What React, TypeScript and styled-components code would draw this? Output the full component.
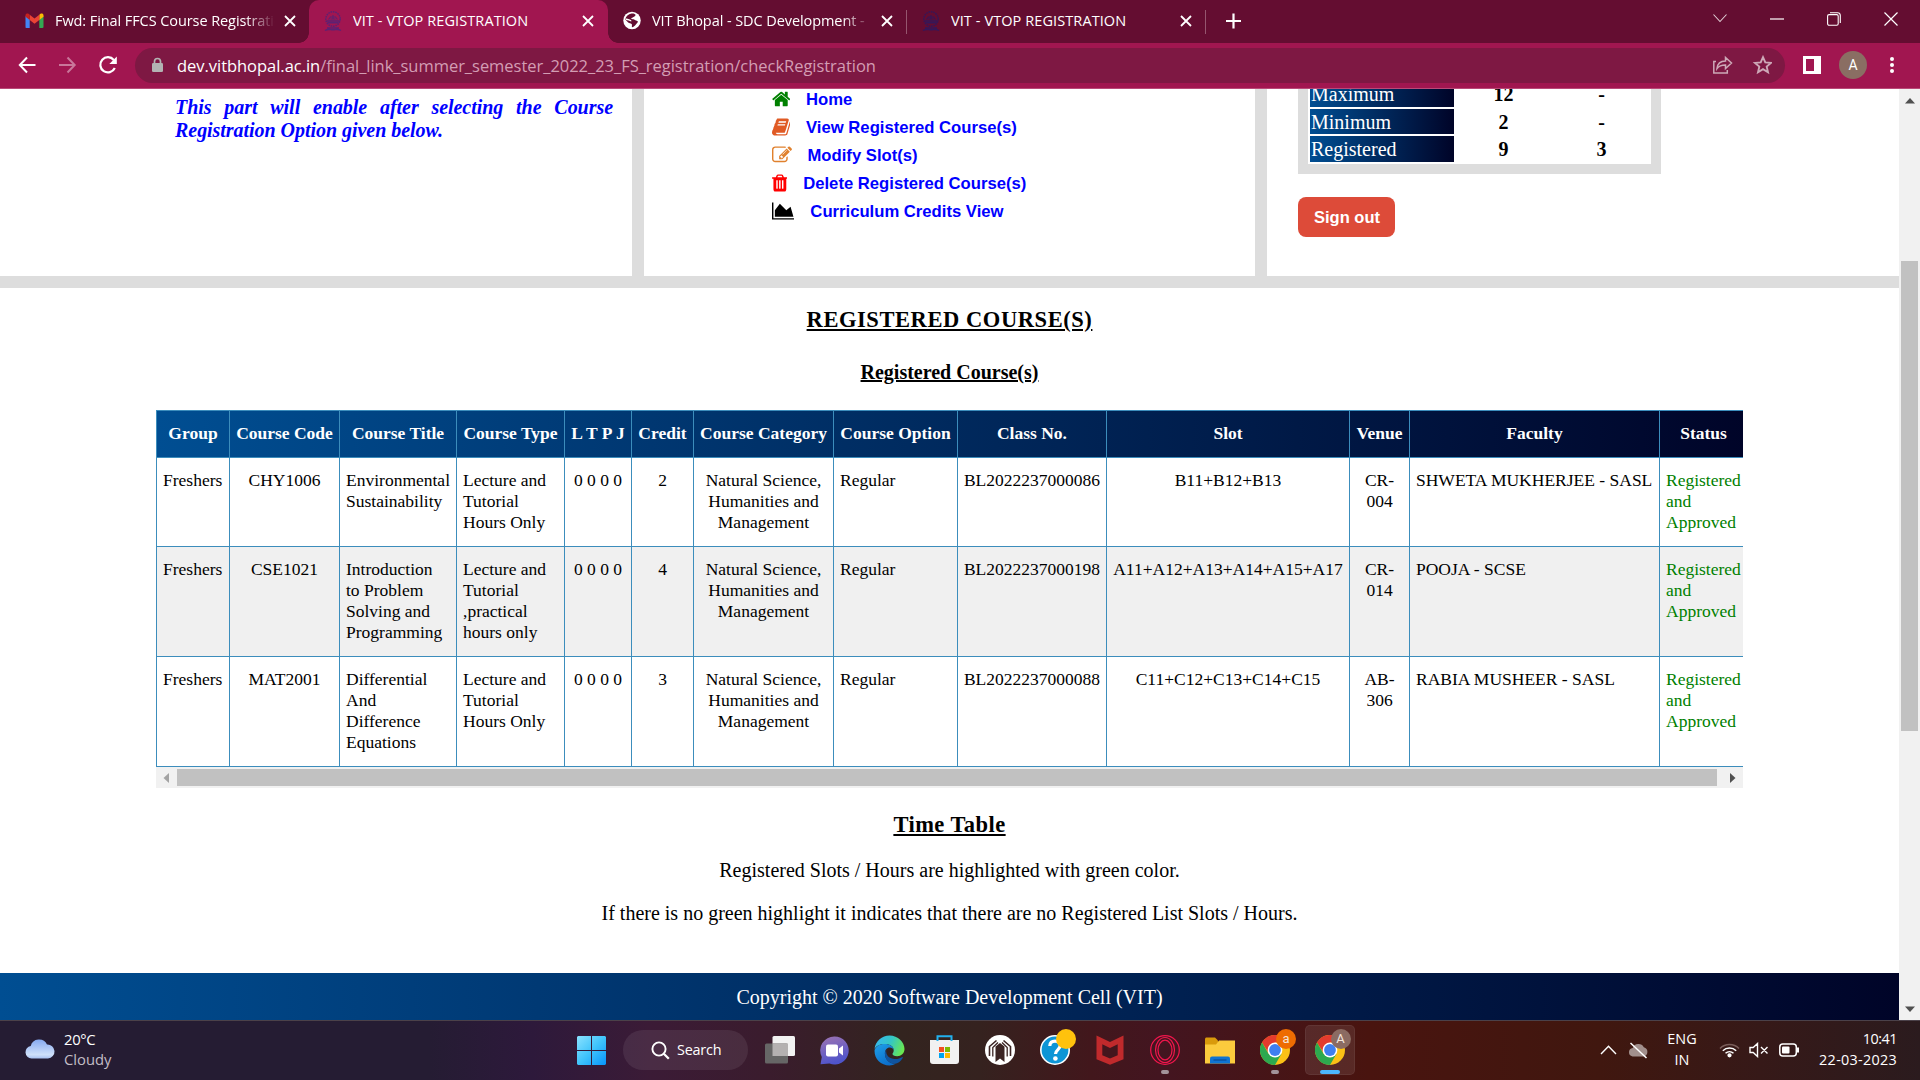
import React from "react";
import styled, { createGlobalStyle, css } from "styled-components";

const ui = `"Open Sans", "Noto Sans", sans-serif`;
const serif = `"Liberation Serif", "Times New Roman", serif`;
const arial = `"Liberation Sans", Arial, sans-serif`;
const royal = "linear-gradient(to right, #004e92, #000428)";

const GlobalStyle = createGlobalStyle`
  * { box-sizing: border-box; }
  body { margin: 0; background: #fff; overflow: hidden; }
  svg { display: block; flex: none; }
`;

const Screen = styled.div`
  width: 1920px;
  height: 1080px;
  display: flex;
  flex-direction: column;
  overflow: hidden;
`;

/* ---------- browser chrome ---------- */

const TitleBar = styled.header`
  height: 43px;
  flex: none;
  display: flex;
  align-items: stretch;
  padding-left: 10px;
  background: #640d31;
  color: #fff;
`;

const Tab = styled.div<{ $active?: boolean; $divided?: boolean }>`
  position: relative;
  width: 299px;
  display: flex;
  align-items: center;
  padding: 0 0 2px 15px;
  ${(p) =>
    p.$active &&
    css`
      background: #a11650;
      border-radius: 10px 10px 0 0;
      &::before,
      &::after {
        content: "";
        position: absolute;
        bottom: 0;
        width: 10px;
        height: 10px;
      }
      &::before {
        left: -10px;
        background: radial-gradient(circle at 0 0, transparent 9.5px, #a11650 10px);
      }
      &::after {
        right: -10px;
        background: radial-gradient(circle at 100% 0, transparent 9.5px, #a11650 10px);
      }
    `}
  ${(p) =>
    p.$divided &&
    css`
      &::after {
        content: "";
        position: absolute;
        right: 0;
        top: 10px;
        width: 1px;
        height: 24px;
        background: #95566f;
      }
    `}
`;

const TabTitle = styled.span<{ $fade?: boolean }>`
  width: 220px;
  margin: 0 9px 0 11px;
  overflow: hidden;
  white-space: nowrap;
  font: 14.5px/20px ${ui};
  letter-spacing: ${(p) => (p.$fade ? -0.08 : 0.09)}px;
  ${(p) => p.$fade && "mask-image: linear-gradient(to right, #000 190px, transparent 220px);"}
`;

const NewTab = styled.div`
  display: flex;
  align-items: center;
  padding: 0 0 2px 20px;
`;

const WindowButtons = styled.div`
  margin-left: auto;
  display: flex;
  align-items: center;
  padding: 0 1px 6px 0;
`;

const WindowButton = styled.div`
  width: 57px;
  display: flex;
  justify-content: center;
`;

const Toolbar = styled.div`
  height: 46px;
  flex: none;
  display: flex;
  align-items: center;
  padding: 0 0 1px 17px;
  background: #a11650;
  border-bottom: 1px solid #b94a78;
`;

const NavButton = styled.div`
  width: 40px;
  display: flex;
`;

const Omnibox = styled.div`
  width: 1650px;
  height: 35px;
  margin: 0 18px 0 -2px;
  border-radius: 18px;
  background: #7e1843;
  display: flex;
  align-items: center;
  padding: 0 13px 0 16px;
`;

const Url = styled.span`
  margin-left: 13px;
  padding-top: 1px;
  flex: 1;
  font: 16.5px/24px ${ui};
  letter-spacing: -0.035px;
  color: #d39db3;
  white-space: nowrap;
  b {
    color: #fff;
    font-weight: 400;
  }
`;

const Avatar = styled.div`
  width: 28px;
  height: 28px;
  margin: 0 22px 0 18px;
  border-radius: 50%;
  background: #8a6e63;
  color: #fff;
  text-align: center;
  font: 14px/28px Roboto, sans-serif;
`;

/* ---------- web page ---------- */

const Viewport = styled.div`
  height: 931px;
  flex: none;
  display: flex;
`;

const Page = styled.main`
  width: 1899px;
  display: flex;
  flex-direction: column;
  background: #fff;
  overflow: hidden;
  font-family: ${serif};
`;

const Panels = styled.section`
  height: 199px;
  flex: none;
  display: grid;
  grid-template-columns: 632px 623px 644px;
  border-bottom: 12px solid #ddd;
  overflow: hidden;
`;

const Panel = styled.div<{ $pad: string; $edge: number }>`
  background: #fff;
  overflow: hidden;
  border-left: ${(p) => p.$edge}px solid #ddd;
  padding: ${(p) => p.$pad};
`;

const Notice = styled.p`
  margin: 0;
  width: 438px;
  text-align: justify;
  color: #00f;
  font: italic bold 20px/23px ${serif};
  letter-spacing: -0.04px;
`;

const Menu = styled.nav`
  margin-top: -4px;
  display: flex;
  flex-direction: column;
`;

const MenuItem = styled.a`
  height: 28px;
  display: flex;
  align-items: center;
  gap: 16px;
  color: #00f;
  font: bold 16.67px/28px ${arial};
  white-space: nowrap;
  span {
    padding-top: 1px;
  }
`;

const Credits = styled.div`
  width: 363px;
  margin-top: -8px;
  padding: 0 10px 10px;
  background: #ddd;
`;

const CreditGrid = styled.div`
  display: grid;
  grid-template-columns: 144px 95px 97px;
  grid-auto-rows: 25.67px;
  gap: 2px;
  padding: 0 2px 2px;
  background: #fff;
`;

const CreditLabel = styled.div`
  padding-left: 1px;
  background: ${royal};
  color: #fff;
  font: 20px/26px ${serif};
`;

const CreditValue = styled.div`
  text-align: center;
  font: bold 20px/26px ${serif};
`;

const SignOut = styled.button`
  display: block;
  width: 97px;
  height: 40px;
  margin-top: 23px;
  padding: 0 0 0 1px;
  border: 0;
  border-radius: 8px;
  background: #dd4b39;
  color: #fff;
  font: bold 16.5px/20px ${arial};
`;

const Heading = styled.h2<{ $size: number; $line: number; $ls: number; $top: number }>`
  margin: ${(p) => p.$top}px 0 0;
  flex: none;
  text-align: center;
  text-decoration: underline;
  font: bold ${(p) => p.$size}px/${(p) => p.$line}px ${serif};
  letter-spacing: ${(p) => p.$ls}px;
`;

const Line = styled.p<{ $top: number }>`
  margin: ${(p) => p.$top}px 0 0;
  flex: none;
  text-align: center;
  font: 20px/24px ${serif};
`;

const TableBox = styled.div`
  width: 1587px;
  margin: 27px 0 0 156px;
  flex: none;
  overflow: hidden;
`;

const Table = styled.table`
  width: 1592px;
  table-layout: fixed;
  border-collapse: separate;
  border-spacing: 0;
  border: solid #3c8dbc;
  border-width: 1px 0 0 1px;
  font: 17.5px/21px ${serif};
`;

const HeadRow = styled.tr`
  background: ${royal};
  color: #fff;
`;

const Th = styled.th`
  height: 47px;
  padding: 0 0 2px;
  border: solid #3c8dbc;
  border-width: 0 1px 1px 0;
  white-space: nowrap;
`;

const Row = styled.tr<{ $shade: boolean }>`
  background: ${(p) => (p.$shade ? "#f0f0f0" : "#fff")};
`;

const Td = styled.td<{ $align?: string; $color?: string }>`
  padding: 12px 0 13px ${(p) => (p.$align === "left" ? 6 : 0)}px;
  border: solid #3c8dbc;
  border-width: 0 1px 1px 0;
  vertical-align: top;
  white-space: pre;
  text-align: ${(p) => p.$align};
  color: ${(p) => p.$color ?? "#000"};
`;

const HScroll = styled.div`
  height: 21px;
  display: flex;
  align-items: center;
  background: #f1f1f1;
  padding: 0 7px 0 7px;
`;

const HThumb = styled.div`
  width: 1540px;
  height: 17px;
  margin: 0 auto 0 8px;
  background: #c1c1c1;
`;

const Footer = styled.footer`
  height: 47px;
  margin-top: auto;
  flex: none;
  background: ${royal};
  color: #fff;
  text-align: center;
  font: 20px/49px ${serif};
`;

const VScroll = styled.div`
  width: 21px;
  display: flex;
  flex-direction: column;
  align-items: center;
  background: #f1f1f1;
  padding: 9px 0 8px;
`;

const VThumb = styled.div`
  width: 17px;
  height: 470px;
  margin: 157px 0 auto;
  background: #c1c1c1;
`;

/* ---------- taskbar ---------- */

const Taskbar = styled.footer`
  height: 60px;
  flex: none;
  display: flex;
  align-items: center;
  padding-bottom: 1px;
  border-top: 1px solid #4b4149;
  background: linear-gradient(
    to right,
    #251c33 0,
    #251c33 430px,
    #2d193b 530px,
    #3b1b36 650px,
    #3a1c2d 770px,
    #33241f 900px,
    #35221f 980px,
    #42171c 1090px,
    #431520 1160px,
    #49140f 1370px,
    #40170f 1600px,
    #361918 1760px,
    #2b1b1e 1920px
  );
  color: #fff;
  font: 14.4px/20px ${ui};
`;

const Weather = styled.div`
  width: 564px;
  display: flex;
  align-items: center;
  gap: 9px;
  padding: 0 0 2px 25px;
  font-size: 14.8px;
  line-height: 20px;
  letter-spacing: -0.3px;
  span {
    display: block;
    color: #c2bdc6;
    letter-spacing: 0;
  }
`;

const Slot = styled.div<{ $active?: boolean }>`
  position: relative;
  width: ${(p) => (p.$active ? 50 : 55)}px;
  margin-left: ${(p) => (p.$active ? 2.5 : 0)}px;
  height: 50px;
  display: flex;
  align-items: center;
  justify-content: center;
  border-radius: 5px;
  ${(p) =>
    p.$active &&
    css`
      background: rgba(255, 255, 255, 0.09);
      box-shadow: inset 0 0 0 1px rgba(255, 255, 255, 0.06);
    `}
`;

const Running = styled.i<{ $wide?: boolean }>`
  position: absolute;
  left: 50%;
  bottom: 1px;
  width: ${(p) => (p.$wide ? 20 : 8)}px;
  height: 4px;
  border-radius: 2px;
  transform: translateX(-50%);
  background: ${(p) => (p.$wide ? "#4cb8ff" : "#a3939a")};
`;

const Badge = styled.b<{ $bg: string; $right?: number }>`
  position: absolute;
  right: ${(p) => p.$right ?? 6}px;
  top: 4px;
  width: 20px;
  height: 20px;
  border-radius: 50%;
  background: ${(p) => p.$bg};
  color: #f3e6dd;
  text-align: center;
  font: 13px/20px Roboto, sans-serif;
`;

const SearchPill = styled.div`
  width: 125px;
  height: 40px;
  margin: 0 4px;
  border-radius: 20px;
  background: rgba(255, 255, 255, 0.08);
  display: flex;
  align-items: center;
  gap: 7px;
  padding-left: 28px;
  letter-spacing: -0.2px;
`;

const Tray = styled.div`
  flex: 1;
  display: flex;
  align-items: center;
  justify-content: flex-end;
  padding-right: 23px;
  white-space: nowrap;
`;

const TrayText = styled.div`
  line-height: 20.5px;
  padding-bottom: 1px;
`;

const Language = styled(TrayText)`
  width: 46px;
  margin-right: 14px;
  text-align: center;
`;

const Clock = styled(TrayText)`
  width: 81px;
  text-align: right;
  letter-spacing: -0.5px;
  span {
    display: block;
    letter-spacing: 0.28px;
  }
`;

const TrayIcon = styled.div<{ $w: number }>`
  width: ${(p) => p.$w}px;
`;

/* ---------- icons ---------- */

const Close = () => (
  <svg width="12" height="12" viewBox="0 0 12 12" stroke="#fff" strokeWidth="1.8">
    <path d="M1 1l10 10M11 1L1 11" />
  </svg>
);

const Gmail = () => (
  <svg width="19" height="16" viewBox="0 0 19 16">
    <path d="M.5 3v10.5A1.2 1.2 0 0 0 1.7 15h3V6z" fill="#4285f4" />
    <path d="M14.3 15h3a1.2 1.2 0 0 0 1.2-1.3V3l-4.2 3z" fill="#34a853" />
    <path d="M14.3 1.8V7l4.2-3.2V2.5C18.5.6 16.5.1 15.2 1z" fill="#fbbc04" />
    <path d="M4.7 7V1.8l4.8 3.7 4.8-3.7V7l-4.8 3.7z" fill="#ea4335" />
    <path d="M.5 2.5v1.3L4.7 7V1.8L3.8 1C2.5.1.5.6.5 2.5z" fill="#c5221f" />
  </svg>
);

const Crest = ({ dim }: { dim?: boolean }) => (
  <svg width="18" height="22" viewBox="0 0 18 22" fill="none" stroke={dim ? "#351758" : "#5c2273"}>
    <circle cx="9" cy="9" r="7.2" strokeWidth="1.5" strokeDasharray="1.6 .8" />
    <path d="M2.5 11h13M3.5 12.7h11" strokeWidth="1.4" />
    <path d="M4.5 9.500l2-2.500h5l2 2.500M9 5v4M6.500 9h5" strokeWidth="1.100" />
    <path d="M1 20.500c3-2 5-.7 8-.7s5-1.300 8 .7M3 18h12" strokeWidth="1.400" />
  </svg>
);

const Globe = () => (
  <svg width="18" height="19" viewBox="0 0 19 19">
    <circle cx="9.5" cy="9.5" r="9.2" fill="#fff" />
    <path
      d="M9 2.200c1.800-.2 3.300.3 4.300 1.100-.2 1.500-1.500 1.800-2.300 2.500-.7.800-2 .7-2.500 1.700 1.200 1 2.700.4 3.700 1.300.8 1 2.600.8 3.600 1.700-.4 1.600-1.700 2.200-2.400 3.400-.8 1.300-2.300 2.300-3.900 2.600-.5-1.200.5-2.400-.4-3.400-1.100-.9-2.500-.6-3.600-1.600C4.500 10.500 3.400 9.600 2.400 8.500 3 5 5.500 2.700 9 2.200z"
      fill="#640d31"
    />
    <path d="M3 8.200c2.500-.4 3.500 1.600 5.700 1.500" stroke="#fff" strokeWidth="1.500" fill="none" />
  </svg>
);

const faIcons = {
  home: {
    box: "64 0 1664 1792",
    w: 18.57,
    color: "#008000",
    d: "M1472 992v480q0 26-19 45t-45 19h-384v-384h-256v384h-384q-26 0-45-19t-19-45v-480q0-1 .5-3t.5-3l575-474 575 474q1 2 1 6zm223-69l-62 74q-8 9-21 11h-3q-13 0-21-7l-692-577-692 577q-12 8-24 7-13-2-21-11l-62-74q-8-10-7-23.5t11-21.5l719-599q32-26 76-26t76 26l244 204v-195q0-14 9-23t23-9h192q14 0 23 9t9 23v408l219 182q10 8 11 21.5t-7 23.5z",
  },
  book: {
    box: "0 0 1664 1792",
    w: 18.57,
    color: "#e05a24",
    d: "M1639 478q40 57 18 129l-275 906q-19 64-76.5 107.5T1183 1664H260q-77 0-148.5-53.5T12 1479q-24-67-2-127 0-4 3-27t4-37q1-8-3-21.5t-3-19.5q2-11 8-21t16.5-23.5T52 1179q23-38 45-91.5t30-91.5q3-10 .5-30t-.5-28q3-11 17-28t17-23q21-36 42-92t25-90q1-9-2.5-32t.5-28q4-13 22-30.5t22-22.5q19-26 42.5-84.5T340 411q1-8-3-25.5t-2-26.5q2-8 9-18t18-23 17-21q8-12 16.5-30.5t15-35 16-36 19.5-32T469 139.5t36-11.5 47.5 5.5l-1 3q38-9 51-9h761q74 0 114 56t18 130l-274 906q-36 119-71.5 153.5T1255 1407H386q-27 0-38 15-11 16-1 43 24 70 144 70h692q29 0 56-15.5t35-41.5l300-987q7-22 5-57 38 15 60 44zM575 480q-4 13 2 22.5t20 9.5h608q13 0 25.5-9.5T1247 480l21-64q4-13-2-22.5t-20-9.5H638q-13 0-25.5 9.5T596 416zm-83 256q-4 13 2 22.5t20 9.5h608q13 0 25.5-9.5T1164 736l21-64q4-13-2-22.5t-20-9.5H555q-13 0-25.5 9.5T513 672z",
  },
  edit: {
    box: "0 0 1792 1792",
    w: 20,
    color: "#e0812e",
    d: "M888 1184l116-116-152-152-116 116v56h96v96h56zm440-720q-16-16-33 1l-350 350q-17 17-1 33t33-1l350-350q17-17 1-33zm80 594v190q0 119-84.5 203.5t-203.5 84.5h-832q-119 0-203.5-84.5t-84.5-203.5v-832q0-119 84.5-203.5t203.5-84.5h832q63 0 117 25 15 7 18 23 3 17-9 29l-49 49q-14 14-32 8-23-6-45-6h-832q-66 0-113 47t-47 113v832q0 66 47 113t113 47h832q66 0 113-47t47-113v-126q0-13 9-22l64-64q15-15 35-7t20 29zm-96-738l288 288-672 672h-288v-288zm444 132l-92 92-288-288 92-92q28-28 68-28t68 28l152 152q28 28 28 68t-28 68z",
  },
  trash: {
    box: "192 0 1408 1792",
    w: 15.71,
    color: "#f00",
    d: "M704 1376v-704q0-14-9-23t-23-9h-64q-14 0-23 9t-9 23v704q0 14 9 23t23 9h64q14 0 23-9t9-23zm256 0v-704q0-14-9-23t-23-9h-64q-14 0-23 9t-9 23v704q0 14 9 23t23 9h64q14 0 23-9t9-23zm256 0v-704q0-14-9-23t-23-9h-64q-14 0-23 9t-9 23v704q0 14 9 23t23 9h64q14 0 23-9t9-23zm-544-992h448l-48-117q-7-9-17-11h-317q-10 2-17 11zm928 32v64q0 14-9 23t-23 9h-96v948q0 83-47 143.5t-113 60.5h-832q-66 0-113-58.5t-47-141.5v-952h-96q-14 0-23-9t-9-23v-64q0-14 9-23t23-9h309l70-167q15-37 54-63t79-26h320q40 0 79 26t54 63l70 167h309q14 0 23 9t9 23z",
  },
  chart: {
    box: "0 0 2048 1792",
    w: 22.86,
    color: "#000",
    d: "M2048 1536v128h-2048v-1536h128v1408h1920zm-384-1024l256 896h-1664v-576l448-576 576 576z",
  },
};

const FaIcon = ({ name }: { name: keyof typeof faIcons }) => {
  const i = faIcons[name];
  return (
    <svg width={i.w} height="20" viewBox={i.box} fill={i.color}>
      <path d={i.d} />
    </svg>
  );
};

const Chrome = () => (
  <svg width="30" height="30" viewBox="0 0 30 30">
    <circle cx="15" cy="15" r="15" fill="#fbc116" />
    <path d="M2 7.5A15 15 0 0 1 28 7.5H15L9 18.5z" fill="#e33b2e" />
    <path d="M2 7.5A15 15 0 0 0 15 30l6.5-11.3L8.5 18.7z" fill="#2da94f" />
    <circle cx="15" cy="15" r="7.4" fill="#fff" />
    <circle cx="15" cy="15" r="5.9" fill="#3f7ff0" />
  </svg>
);

const Edge = () => (
  <svg width="31" height="31" viewBox="0 0 31 31">
    <defs>
      <linearGradient id="edgeTop" x1="0" y1="0.3" x2="1" y2="0.6">
        <stop offset="0" stopColor="#36b8ef" />
        <stop offset="0.5" stopColor="#34c6c4" />
        <stop offset="1" stopColor="#6be94d" />
      </linearGradient>
      <linearGradient id="edgeLeft" x1="0" y1="0" x2="0.6" y2="1">
        <stop offset="0" stopColor="#1fa0e8" />
        <stop offset="1" stopColor="#0b6dcb" />
      </linearGradient>
    </defs>
    <path d="M.5 14C1.5 6 8 .5 15.5.5 24 .5 30.5 7 30.5 14c0 4.5-3.5 7.2-7.3 7.2-3.2 0-4.7-1.3-4.7-2.3 0-.8 1.2-1.3 1.2-3.7C19.7 11.5 16 9 11 9 6 9 2 11 .5 14z" fill="url(#edgeTop)" />
    <path d="M.5 15.5C1.5 11.5 5.5 9 10.5 9c5.5 0 9 2.5 9.2 6-.5-1.5-2-2.5-3.8-2.5-3 0-5 2.5-5 6 0 5.5 4.5 10.5 10.6 10.3-2 1.2-4 1.7-6 1.7C7 30.5.3 24 .5 15.5z" fill="url(#edgeLeft)" />
    <path d="M12.3 15c-1 5 3.2 9 8.7 9 3 0 5.5-1 7-1.8.7-.3 1 .2.7.7-2.2 3.7-5 5.5-7.7 5.9-5.5.2-10.1-4.3-10.1-10 0-1.400.5-2.900 1.400-3.800z" fill="#0f54a0" />
  </svg>
);

const columns = [
  { label: "Group", w: 73, align: "left" },
  { label: "Course Code", w: 110, align: "center" },
  { label: "Course Title", w: 117, align: "left" },
  { label: "Course Type", w: 108, align: "left" },
  { label: "L T P J", w: 67, align: "center" },
  { label: "Credit", w: 62, align: "center" },
  { label: "Course Category", w: 140, align: "center" },
  { label: "Course Option", w: 124, align: "left" },
  { label: "Class No.", w: 149, align: "center" },
  { label: "Slot", w: 243, align: "center" },
  { label: "Venue", w: 60, align: "center" },
  { label: "Faculty", w: 250, align: "left" },
  { label: "Status", w: 88, align: "left" },
];

const category = "Natural Science,\nHumanities and\nManagement";
const status = "Registered\nand\nApproved";
const courses = [
  ["Freshers", "CHY1006", "Environmental\nSustainability", "Lecture and\nTutorial\nHours Only", "0 0 0 0", "2", category, "Regular", "BL2022237000086", "B11+B12+B13", "CR-\n004", "SHWETA MUKHERJEE - SASL", status],
  ["Freshers", "CSE1021", "Introduction\nto Problem\nSolving and\nProgramming", "Lecture and\nTutorial\n,practical\nhours only", "0 0 0 0", "4", category, "Regular", "BL2022237000198", "A11+A12+A13+A14+A15+A17", "CR-\n014", "POOJA - SCSE", status],
  ["Freshers", "MAT2001", "Differential\nAnd\nDifference\nEquations", "Lecture and\nTutorial\nHours Only", "0 0 0 0", "3", category, "Regular", "BL2022237000088", "C11+C12+C13+C14+C15", "AB-\n306", "RABIA MUSHEER - SASL", status],
];

const menu: [keyof typeof faIcons, string][] = [
  ["home", "Home"],
  ["book", "View Registered Course(s)"],
  ["edit", "Modify Slot(s)"],
  ["trash", "Delete Registered Course(s)"],
  ["chart", "Curriculum Credits View"],
];

const credits = [
  ["Maximum", "12", "-"],
  ["Minimum", "2", "-"],
  ["Registered", "9", "3"],
];

const BrowserChrome = () => (
  <>
    <TitleBar>
      <Tab>
        <Gmail />
        <TabTitle $fade>Fwd: Final FFCS Course Registration</TabTitle>
        <Close />
      </Tab>
      <Tab $active>
        <Crest />
        <TabTitle>VIT - VTOP REGISTRATION</TabTitle>
        <Close />
      </Tab>
      <Tab $divided>
        <Globe />
        <TabTitle $fade>VIT Bhopal - SDC Development -</TabTitle>
        <Close />
      </Tab>
      <Tab $divided>
        <Crest dim />
        <TabTitle>VIT - VTOP REGISTRATION</TabTitle>
        <Close />
      </Tab>
      <NewTab>
        <svg width="15" height="16" viewBox="0 0 15 16" stroke="#fff" strokeWidth="2.2">
          <path d="M0 8h15M7.5.5v15" />
        </svg>
      </NewTab>
      <WindowButtons>
        <WindowButton>
          <svg width="14" height="9" viewBox="0 0 14 9" fill="none" stroke="#e0cdd5" strokeWidth="1.1">
            <path d="M.5.5L7 7.5 13.5.5" />
          </svg>
        </WindowButton>
        <WindowButton>
          <svg width="14" height="2" viewBox="0 0 14 2">
            <path d="M0 1h14" stroke="#fff" strokeWidth="1.2" />
          </svg>
        </WindowButton>
        <WindowButton>
          <svg width="14" height="14" viewBox="0 0 14 14" fill="none" stroke="#fff" strokeWidth="1.1">
            <rect x=".6" y="2.6" width="10.6" height="10.6" rx="1.5" />
            <path d="M3 .7h7.5a2.8 2.8 0 0 1 2.8 2.8V11" />
          </svg>
        </WindowButton>
        <WindowButton>
          <svg width="14" height="14" viewBox="0 0 14 14" stroke="#fff" strokeWidth="1.2">
            <path d="M.5.5l13 13M13.5.5l-13 13" />
          </svg>
        </WindowButton>
      </WindowButtons>
    </TitleBar>
    <Toolbar>
      <NavButton>
        <svg width="20" height="20" viewBox="0 0 20 20" fill="none" stroke="#fff" strokeWidth="2">
          <path d="M18.5 10H3.5M10 2.5L2.8 10l7.2 7.5" />
        </svg>
      </NavButton>
      <NavButton>
        <svg width="20" height="20" viewBox="0 0 20 20" fill="none" stroke="#c9779a" strokeWidth="2">
          <path d="M2 10h15M10.5 2.5l7.2 7.5-7.2 7.5" />
        </svg>
      </NavButton>
      <NavButton>
        <svg width="22" height="20" viewBox="0 0 22 20">
          <path d="M17.8 13a7.6 7.6 0 1 1-1-8" fill="none" stroke="#fff" strokeWidth="2.2" />
          <path d="M19.8 1.5v7.5h-7.5z" fill="#fff" />
        </svg>
      </NavButton>
      <Omnibox>
        <svg width="13" height="16" viewBox="0 0 13 16">
          <rect x="1" y="6" width="11" height="9" rx="1.3" fill="#b3b3b3" />
          <path d="M3.5 7V4.5a3 3 0 0 1 6 0V7" fill="none" stroke="#b3b3b3" strokeWidth="1.7" />
        </svg>
        <Url>
          <b>dev.vitbhopal.ac.in</b>/final_link_summer_semester_2022_23_FS_registration/checkRegistration
        </Url>
        <svg width="60" height="20" viewBox="0 0 60 20" fill="none" stroke="#cda8b7" strokeWidth="1.5">
          <path d="M4 6.5H1.8v11.5h13.5v-3M5 13.5c.5-5 3.5-7.5 8.5-7.5V2.5l6 5.5-6 5.5V10c-4 0-6.5.8-8.5 3.5z" />
          <path d="M51 2.2l2.3 5.2 5.7.5-4.3 3.7 1.3 5.6-5-3-5 3 1.3-5.6L43 7.9l5.7-.5z" strokeWidth="1.9" />
        </svg>
      </Omnibox>
      <svg width="18" height="18" viewBox="0 0 18 18">
        <path d="M0 0h18v18H0zM3 3v12h8V3z" fillRule="evenodd" fill="#fff" />
      </svg>
      <Avatar>A</Avatar>
      <svg width="6" height="18" viewBox="0 0 6 18" fill="#fff">
        <circle cx="3" cy="3" r="2" />
        <circle cx="3" cy="9" r="2" />
        <circle cx="3" cy="15" r="2" />
      </svg>
    </Toolbar>
  </>
);

const RegistrationPage = () => (
  <Viewport>
    <Page>
      <Panels>
        <Panel $edge={0} $pad="7px 0 0 175px">
          <Notice>This part will enable after selecting the Course Registration Option given below.</Notice>
        </Panel>
        <Panel $edge={12} $pad="0 0 0 127.5px">
          <Menu>
            {menu.map(([icon, label]) => (
              <MenuItem key={label}>
                <FaIcon name={icon} />
                <span>{label}</span>
              </MenuItem>
            ))}
          </Menu>
        </Panel>
        <Panel $edge={12} $pad="0 0 0 31px">
          <Credits>
            <CreditGrid>
              {credits.map(([label, a, b]) => (
                <React.Fragment key={label}>
                  <CreditLabel>{label}</CreditLabel>
                  <CreditValue>{a}</CreditValue>
                  <CreditValue>{b}</CreditValue>
                </React.Fragment>
              ))}
            </CreditGrid>
          </Credits>
          <SignOut>Sign out</SignOut>
        </Panel>
      </Panels>
      <Heading $size={22.5} $line={26} $ls={0.57} $top={19}>
        REGISTERED COURSE(S)
      </Heading>
      <Heading $size={20} $line={22} $ls={0} $top={28}>
        Registered Course(s)
      </Heading>
      <TableBox>
        <Table>
          <colgroup>
            {columns.map((c) => (
              <col key={c.label} width={c.w} />
            ))}
          </colgroup>
          <thead>
            <HeadRow>
              {columns.map((c) => (
                <Th key={c.label}>{c.label}</Th>
              ))}
            </HeadRow>
          </thead>
          <tbody>
            {courses.map((row, r) => (
              <Row key={r} $shade={r % 2 === 1}>
                {row.map((cell, c) => (
                  <Td key={c} $align={columns[c].align} $color={c === 12 ? "#008000" : undefined}>
                    {cell}
                  </Td>
                ))}
              </Row>
            ))}
          </tbody>
        </Table>
        <HScroll>
          <svg width="6" height="10" viewBox="0 0 6 10">
            <path d="M6 0v10L.5 5z" fill="#a3a3a3" />
          </svg>
          <HThumb />
          <svg width="6" height="10" viewBox="0 0 6 10">
            <path d="M0 0v10l5.5-5z" fill="#505050" />
          </svg>
        </HScroll>
      </TableBox>
      <Heading $size={22.5} $line={26} $ls={0.45} $top={24}>
        Time Table
      </Heading>
      <Line $top={20}>Registered Slots / Hours are highlighted with green color.</Line>
      <Line $top={19}>
        If there is no green highlight it indicates that there are no Registered List Slots / Hours.
      </Line>
      <Footer>Copyright © 2020 Software Development Cell (VIT)</Footer>
    </Page>
    <VScroll>
      <svg width="10" height="6" viewBox="0 0 10 6">
        <path d="M0 5.5h10L5 0z" fill="#505050" />
      </svg>
      <VThumb />
      <svg width="10" height="6" viewBox="0 0 10 6">
        <path d="M0 .5h10L5 6z" fill="#505050" />
      </svg>
    </VScroll>
  </Viewport>
);

const WindowsTaskbar = () => (
  <Taskbar>
    <Weather>
      <svg width="30" height="24" viewBox="0 0 30 24">
        <defs>
          <linearGradient id="cloud" x1="0" y1="0" x2="0" y2="1">
            <stop offset="0" stopColor="#86aaf0" />
            <stop offset="0.8" stopColor="#cfe0fa" />
            <stop offset="1" stopColor="#a8c1f1" />
          </linearGradient>
        </defs>
        <path d="M6.5 21.5a6.3 6.3 0 0 1-.8-12.5A8.7 8.7 0 0 1 22 7.5a7 7 0 0 1 1 14z" fill="url(#cloud)" />
      </svg>
      <div>
        20°C
        <span>Cloudy</span>
      </div>
    </Weather>
    <Slot>
      <svg width="29" height="29" viewBox="0 0 29 29">
        <defs>
          <linearGradient id="win" x1="0" y1="0" x2="1" y2="1">
            <stop offset="0" stopColor="#8be2ff" />
            <stop offset="0.5" stopColor="#40c4fb" />
            <stop offset="1" stopColor="#0794fb" />
          </linearGradient>
        </defs>
        <path d="M1 0h13v14H0V1zM15 0h13l1 1v13H15zM0 15h14v14H1l-1-1zM15 15h14v13l-1 1H15z" fill="url(#win)" />
      </svg>
    </Slot>
    <SearchPill>
      <svg width="19" height="19" viewBox="0 0 19 19" fill="none" stroke="#fff" strokeWidth="1.9">
        <circle cx="8" cy="8" r="6.6" />
        <path d="M12.8 12.8l5 5" strokeWidth="2.3" />
      </svg>
      Search
    </SearchPill>
    <Slot>
      <svg width="30" height="28" viewBox="0 0 30 28">
        <rect x="7.5" width="22.5" height="20" rx="1.5" fill="#f2f2f2" />
        <rect y="7.5" width="23" height="20" rx="1.5" fill="#666" />
        <path d="M7.5 7.5H23V20H7.5z" fill="#b4b1b1" />
      </svg>
    </Slot>
    <Slot>
      <svg width="29" height="29" viewBox="0 0 29 29">
        <defs>
          <linearGradient id="chat" x1="0" y1="0" x2="0.3" y2="1">
            <stop offset="0" stopColor="#9e74b2" />
            <stop offset="1" stopColor="#4f54cb" />
          </linearGradient>
        </defs>
        <path d="M14.5.5a14 14 0 1 1-5 27L.5 28.2 1.8 21A14 14 0 0 1 14.5.5z" fill="url(#chat)" />
        <rect x="6" y="8.5" width="12" height="12" rx="2" fill="#fff" />
        <path d="M19 12.5l4-3v10l-4-3z" fill="#fff" />
      </svg>
    </Slot>
    <Slot>
      <Edge />
    </Slot>
    <Slot>
      <svg width="29" height="30" viewBox="0 0 29 30">
        <path d="M0 5h29v21a3 3 0 0 1-3 3H3a3 3 0 0 1-3-3z" fill="#f1f1f1" />
        <path d="M7.5 6V1.2h14V6" fill="none" stroke="#22b1ee" strokeWidth="2" />
        <path d="M9 12h5v5H9z" fill="#f25022" />
        <path d="M15 12h5v5h-5z" fill="#7fba00" />
        <path d="M9 18h5v5H9z" fill="#00a4ef" />
        <path d="M15 18h5v5h-5z" fill="#ffb900" />
      </svg>
    </Slot>
    <Slot>
      <svg width="30" height="30" viewBox="0 0 30 30">
        <circle cx="15" cy="15" r="15" fill="#fff" />
        <g fill="none" stroke="#3b2423" strokeWidth="1.6">
          <path d="M4.500 21V11.500L11.500 5.500M25.500 21V11.500L18.500 5.500" />
          <path d="M7.800 21.500V12.500L13 7.500M22.200 21.500V12.500L17 7.500" strokeWidth="1.300" />
        </g>
        <path d="M10.500 11.500L15 8l4.500 3.500V27L15 23.500 10.500 27z" fill="#3b2423" />
      </svg>
    </Slot>
    <Slot>
      <svg width="30" height="30" viewBox="0 0 30 30">
        <circle cx="15" cy="15" r="14.2" fill="#0d95d6" stroke="#fff" strokeWidth="1.6" />
        <path d="M9.8 11c.2-3.2 2.3-4.8 5.2-4.8 3 0 5.2 1.7 5.2 4.4 0 4-4.7 4-4.7 8.4" fill="none" stroke="#fff" strokeWidth="3.2" />
        <circle cx="15.4" cy="23.5" r="2.3" fill="#fff" />
      </svg>
      <Badge $bg="#ffc20d" />
    </Slot>
    <Slot>
      <svg width="28" height="30" viewBox="0 0 28 30">
        <path d="M.5.5L14 7 27.5.5v23.8L14 29.8.5 24.3z" fill="#c02a2c" />
        <path d="M6.3 9.2l7.7 3.8 7.7-3.8v11L14 23.5l-7.7-3.3z" fill="#43161d" />
      </svg>
    </Slot>
    <Slot>
      <svg width="30" height="30" viewBox="0 0 30 30" fill="none" stroke="#f2164d" strokeWidth="1.2">
        <circle cx="15" cy="15" r="14.3" />
        <ellipse cx="15" cy="15" rx="9.5" ry="12.5" />
        <ellipse cx="15" cy="15" rx="7" ry="9.8" />
      </svg>
      <Running />
    </Slot>
    <Slot>
      <svg width="30" height="27" viewBox="0 0 30 27">
        <path d="M0 2.2C0 1 .7.5 1.5.5H10l3 3v5H0z" fill="#d99a0b" />
        <path d="M0 7.5L11 7.5 14 3.5H30V26.5H0z" fill="#fbcb3d" />
        <path d="M5 26.5v-5a2 2 0 0 1 2-2h16a2 2 0 0 1 2 2v5z" fill="#0f74d2" />
        <path d="M8.5 23h13" stroke="#0a4a94" strokeWidth="1.2" />
      </svg>
    </Slot>
    <Slot>
      <Chrome />
      <Badge $bg="#ee6c02">a</Badge>
      <Running />
    </Slot>
    <Slot $active>
      <Chrome />
      <Badge $bg="#8b6b62" $right={4}>
        A
      </Badge>
      <Running $wide />
    </Slot>
    <Tray>
      <TrayIcon $w={28}>
        <svg width="17" height="10" viewBox="0 0 17 10" fill="none" stroke="#fff" strokeWidth="1.4">
          <path d="M1 9l7.5-7.8L16 9" />
        </svg>
      </TrayIcon>
      <TrayIcon $w={31}>
        <svg width="21" height="17" viewBox="0 0 21 17">
          <path d="M4.5 14.5a4.3 4.3 0 0 1 .3-8.5 6 6 0 0 1 11-.7 4.7 4.7 0 0 1-.3 9.2z" fill="#a18f8c" />
          <path d="M2.5 1l16 15" stroke="#fff" strokeWidth="1.5" />
        </svg>
      </TrayIcon>
      <Language>
        ENG
        <br />
        IN
      </Language>
      <TrayIcon $w={30}>
        <svg width="21" height="16" viewBox="-1 0 21 16" fill="none" stroke="#fff" strokeWidth="1.5">
          <path d="M0 6.5a13.5 13.5 0 0 1 19 0" stroke="#7a5d5a" />
          <path d="M2.8 8.8a9.7 9.7 0 0 1 13.4 0M5.5 11.3a6 6 0 0 1 8 0" />
          <circle cx="9.5" cy="13.3" r="1.4" fill="#fff" />
        </svg>
      </TrayIcon>
      <TrayIcon $w={30}>
        <svg width="20" height="16" viewBox="0 0 20 16" fill="none" stroke="#fff" strokeWidth="1.4">
          <path d="M1 5.5h3.2L8.5 1.5v13L4.2 10.5H1zM12 5l6.5 6.5M18.5 5L12 11.5" />
        </svg>
      </TrayIcon>
      <TrayIcon $w={37}>
        <svg width="21" height="14" viewBox="0 0 21 14">
          <rect x=".8" y="1" width="16.5" height="12" rx="3" fill="none" stroke="#fff" strokeWidth="1.5" />
          <rect x="3" y="3.5" width="7.5" height="7" rx="1" fill="#fff" />
          <path d="M19 4.5v5" stroke="#fff" strokeWidth="2" />
        </svg>
      </TrayIcon>
      <Clock>
        10:41
        <span>22-03-2023</span>
      </Clock>
    </Tray>
  </Taskbar>
);

export default function App() {
  return (
    <Screen>
      <GlobalStyle />
      <BrowserChrome />
      <RegistrationPage />
      <WindowsTaskbar />
    </Screen>
  );
}
